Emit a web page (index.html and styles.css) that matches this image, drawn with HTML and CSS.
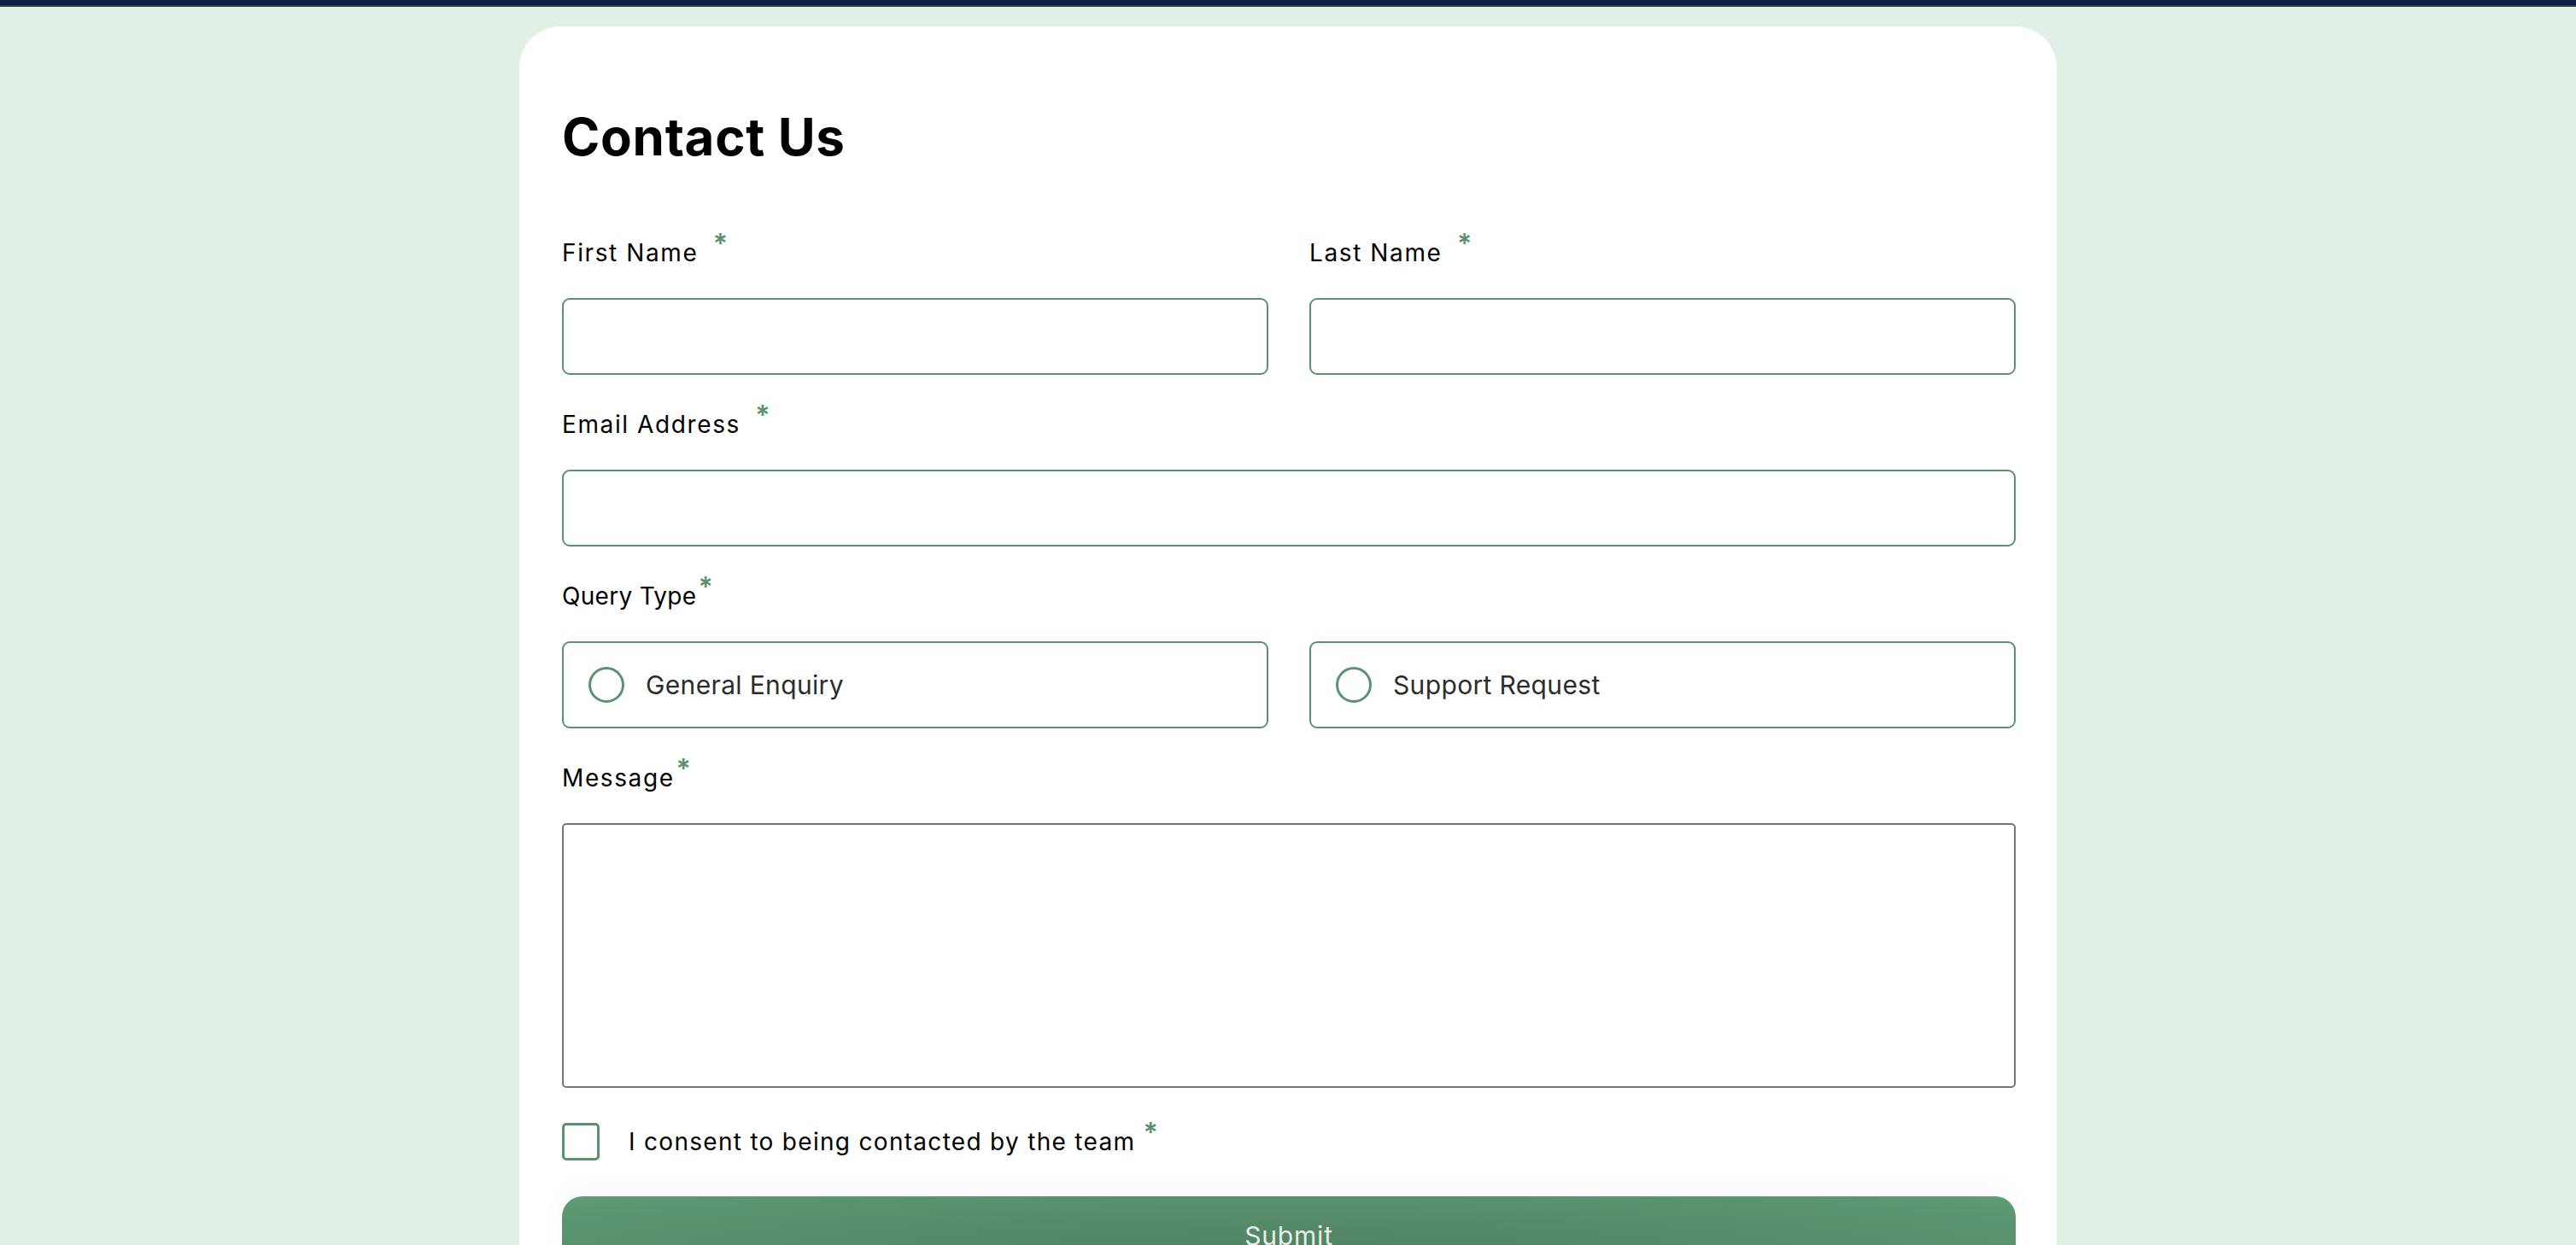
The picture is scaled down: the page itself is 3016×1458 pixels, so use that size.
FILE: index.html
```html
<!DOCTYPE html>
<html lang="en">
<head>
<meta charset="utf-8">
<title>Contact Us</title>
<link rel="stylesheet" href="styles.css">
</head>
<body>
<div class="topbar"></div>
<main class="page">
  <form class="card">
    <h1 class="title">Contact Us</h1>
    <div class="row">
      <div class="field">
        <label class="label">First Name <span class="req req-gap">*</span></label>
        <div class="input"></div>
      </div>
      <div class="field">
        <label class="label">Last Name <span class="req req-gap">*</span></label>
        <div class="input"></div>
      </div>
    </div>
    <div class="field">
      <label class="label">Email Address <span class="req req-gap">*</span></label>
      <div class="input"></div>
    </div>
    <div class="field">
      <label class="label label-tight">Query Type<span class="req">*</span></label>
      <div class="row radios">
        <div class="radio"><span class="circle"></span><span class="radio-text">General Enquiry</span></div>
        <div class="radio"><span class="circle"></span><span class="radio-text">Support Request</span></div>
      </div>
    </div>
    <div class="field">
      <label class="label">Message<span class="req">*</span></label>
      <div class="textarea"></div>
    </div>
    <div class="consent">
      <span class="checkbox"></span>
      <span class="consent-text">I consent to being contacted by the team <span class="req">*</span></span>
    </div>
    <button class="submit" type="button">Submit</button>
  </form>
</main>
</body>
</html>
```

FILE: styles.css
```css
html, body {
  margin: 0;
  padding: 0;
  background: #e1f0e6;
  overflow: hidden;
}
body {
  font-family: "Inter", "Noto Sans", sans-serif;
  color: #000;
}
.topbar {
  height: 6px;
  background: #0e2043;
  border-bottom: 2px solid #3a3e44;
}
.page {
  padding-top: 23px;
}
.card {
  width: 1800px;
  box-sizing: border-box;
  margin: 0 auto;
  background: #fff;
  border-radius: 48px;
  padding: 93px 48px 60px 50px;
  display: flex;
  flex-direction: column;
  gap: 42px;
}
.title {
  margin: 0 0 42px 0;
  font-size: 60px;
  line-height: 72px;
  font-weight: 700;
  letter-spacing: 0.7px;
}
.row {
  display: grid;
  grid-template-columns: 1fr 1fr;
  gap: 48px;
}
.field {
  display: flex;
  flex-direction: column;
}
.label {
  font-size: 28px;
  line-height: 32px;
  height: 32px;
  margin-bottom: 37px;
  letter-spacing: 1.6px;
}
.label-tight {
  letter-spacing: 0.3px;
}
.req {
  color: #5a926e;
  font-size: 32px;
  line-height: 0;
  font-weight: 600;
  position: relative;
  top: -9px;
  margin-left: 2px;
  letter-spacing: 0;
}
.req-gap {
  margin-left: 8px;
}
.input {
  height: 86px;
  border: 2px solid #5a926e;
  border-radius: 9px;
}
.radio {
  height: 98px;
  border: 2px solid #5a926e;
  border-radius: 9px;
  display: flex;
  align-items: center;
  padding-left: 29px;
}
.circle {
  width: 36px;
  height: 36px;
  border: 3px solid #5a926e;
  border-radius: 50%;
  flex: none;
}
.radio-text {
  margin-left: 25px;
  font-size: 30px;
  color: #2c2c2c;
  letter-spacing: 0.35px;
}
.textarea {
  height: 306px;
  border: 2px solid #767676;
  border-radius: 5px;
}
.consent {
  display: flex;
  align-items: center;
  height: 44px;
  margin-top: -1px;
}
.checkbox {
  width: 38px;
  height: 38px;
  border: 3px solid #5a926e;
  border-radius: 5px;
  flex: none;
}
.consent-text {
  margin-left: 34px;
  font-size: 28px;
  line-height: 34px;
  letter-spacing: 1.3px;
}
.consent-text .req {
  margin-left: 0;
}
.submit {
  height: 92px;
  border: none;
  border-radius: 24px;
  background: radial-gradient(ellipse at 50% 80%, #4d8060 0%, #568b69 45%, #5a936f 80%, #5f9c77 100%);
  color: #e9eeea;
  font-family: inherit;
  font-size: 30px;
  letter-spacing: 0.8px;
  box-shadow: 0 -10px 30px rgba(0, 0, 0, 0.03);
}
```
